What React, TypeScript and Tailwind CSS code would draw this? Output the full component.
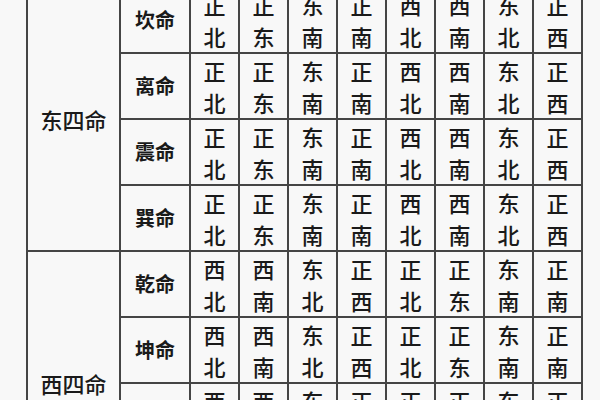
const east = ["正北", "正东", "东南", "正南", "西北", "西南", "东北", "正西"];
const west = ["西北", "西南", "东北", "正西", "正北", "正东", "东南", "正南"];

const groups = [
  { label: "东四命", rows: ["坎命", "离命", "震命", "巽命"], dirs: east },
  { label: "西四命", rows: ["乾命", "坤命", "艮命", "兑命"], dirs: west },
];

const cell = "border-2 border-[#454545] p-0 text-center align-middle";

export default function App() {
  return (
    <div
      className="h-[400px] w-[600px] overflow-hidden bg-[#f8f8f8] pl-[26px] text-[#1a1a1a]"
      style={{ fontFamily: '"Noto Sans CJK SC", "Noto Sans", sans-serif' }}
    >
      <table className="-mt-[14px] table-fixed border-collapse">
        <colgroup>
          <col className="w-[93px]" />
          <col className="w-[70px]" />
          {east.map((_, i) => (
            <col key={i} className="w-[49px]" />
          ))}
        </colgroup>
        <tbody>
          {groups.map((g) =>
            g.rows.map((name, ri) => (
              <tr key={name} className="h-[66px]">
                {ri === 0 ? (
                  <td rowSpan={4} className={`${cell} text-[22px] font-medium`}>
                    {g.label}
                  </td>
                ) : null}
                <td className={`${cell} text-[20px] font-bold`}>{name}</td>
                {g.dirs.map((d, i) => (
                  <td key={i} className={`${cell} text-[22px] leading-[32px] font-medium`}>
                    <div>{d[0]}</div>
                    <div>{d[1]}</div>
                  </td>
                ))}
              </tr>
            )),
          )}
        </tbody>
      </table>
    </div>
  );
}
